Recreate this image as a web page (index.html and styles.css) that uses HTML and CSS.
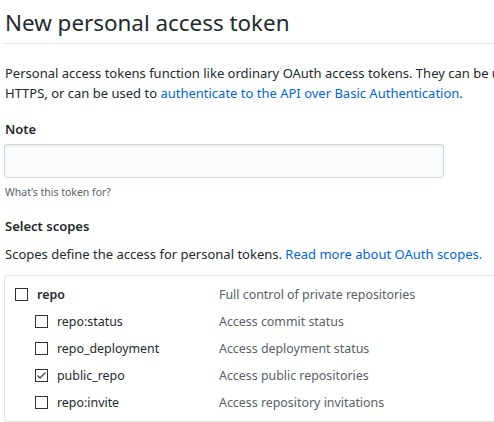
FILE: index.html
```html
<!DOCTYPE html>
<html>
<head>
<meta charset="utf-8">
<link rel="stylesheet" href="styles.css">
</head>
<body>
<div class="page">
  <h2 class="title">New personal access token</h2>
  <p class="lead">Personal access tokens function like ordinary OAuth access tokens. They can be used instead of a password for Git over<br>HTTPS, or can be used to <a href="#">authenticate to the API over Basic Authentication</a>.</p>

  <div class="field">
    <label class="label">Note</label>
    <input class="input" type="text">
    <p class="note">What’s this token for?</p>
  </div>

  <div class="field scopes-head">
    <div class="label">Select scopes</div>
    <p class="desc">Scopes define the access for personal tokens. <a href="#">Read more about OAuth scopes.</a></p>
  </div>

  <div class="scopes">
    <div class="row">
      <div class="name top"><span class="cb"></span><span class="strong">repo</span></div>
      <div class="what">Full control of private repositories</div>
    </div>
    <div class="row">
      <div class="name sub"><span class="cb"></span><span>repo:status</span></div>
      <div class="what">Access commit status</div>
    </div>
    <div class="row">
      <div class="name sub"><span class="cb"></span><span>repo_deployment</span></div>
      <div class="what">Access deployment status</div>
    </div>
    <div class="row">
      <div class="name sub"><span class="cb checked"><svg width="11" height="11" viewBox="0 0 11 11"><path d="M1.5 5.5 L4 8 L9.5 2.5" fill="none" stroke="#444" stroke-width="1.3"/></svg></span><span>public_repo</span></div>
      <div class="what">Access public repositories</div>
    </div>
    <div class="row">
      <div class="name sub"><span class="cb"></span><span>repo:invite</span></div>
      <div class="what">Access repository invitations</div>
    </div>
  </div>
</div>
</body>
</html>
```
FILE: styles.css
```css
html, body {
  margin: 0;
  padding: 0;
  overflow: hidden;
  background: #fff;
}
body {
  font-family: "Noto Sans", "Open Sans", sans-serif;
  font-size: 13px;
  color: #24292e;
}
.page {
  width: 900px;
  padding-left: 4px;
}
.title {
  margin: 0;
  padding: 7px 1px 0;
  font-size: 22.4px;
  font-weight: 400;
  line-height: 32px;
  height: 36px;
  border-bottom: 1px solid #e1e4e8;
}
.lead {
  margin: 19px 0 0 1px;
  line-height: 20px;
  white-space: nowrap;
}
a {
  color: #0366d6;
  text-decoration: none;
}
.field {
  margin-top: 16px;
}
.label {
  display: block;
  font-weight: 600;
  line-height: 20px;
  margin-left: 1px;
  margin-top: 0;
}
.input {
  display: block;
  box-sizing: border-box;
  width: 440px;
  height: 34px;
  margin: 5px 0 0;
  background: #fafbfc;
  border: 1px solid #d1d5da;
  border-radius: 3px;
  box-shadow: inset 0 1px 2px rgba(27,31,35,0.075);
}
.note {
  margin: 6px 0 0 1px;
  font-size: 10.5px;
  line-height: 16px;
  color: #586069;
}
.scopes-head {
  margin-top: 16px;
}
.desc {
  margin: 8px 0 0 1px;
  line-height: 20px;
}
.scopes {
  margin-top: 11px;
  border: 1px solid #e1e4e8;
  border-radius: 3px;
  padding: 5px 0 5px 10px;
  font-size: 12.4px;
}
.row {
  display: flex;
  height: 27px;
  align-items: center;
}
.name {
  width: 204px;
  display: flex;
  align-items: center;
}
.name.sub {
  padding-left: 20px;
  width: 184px;
}
.cb {
  box-sizing: border-box;
  width: 13px;
  height: 13px;
  border: 1px solid #333;
  background: #fff;
  margin-right: 9px;
  display: flex;
  align-items: center;
  justify-content: center;
  flex: none;
}
.strong {
  font-weight: 600;
}
.what {
  color: #586069;
}
```
